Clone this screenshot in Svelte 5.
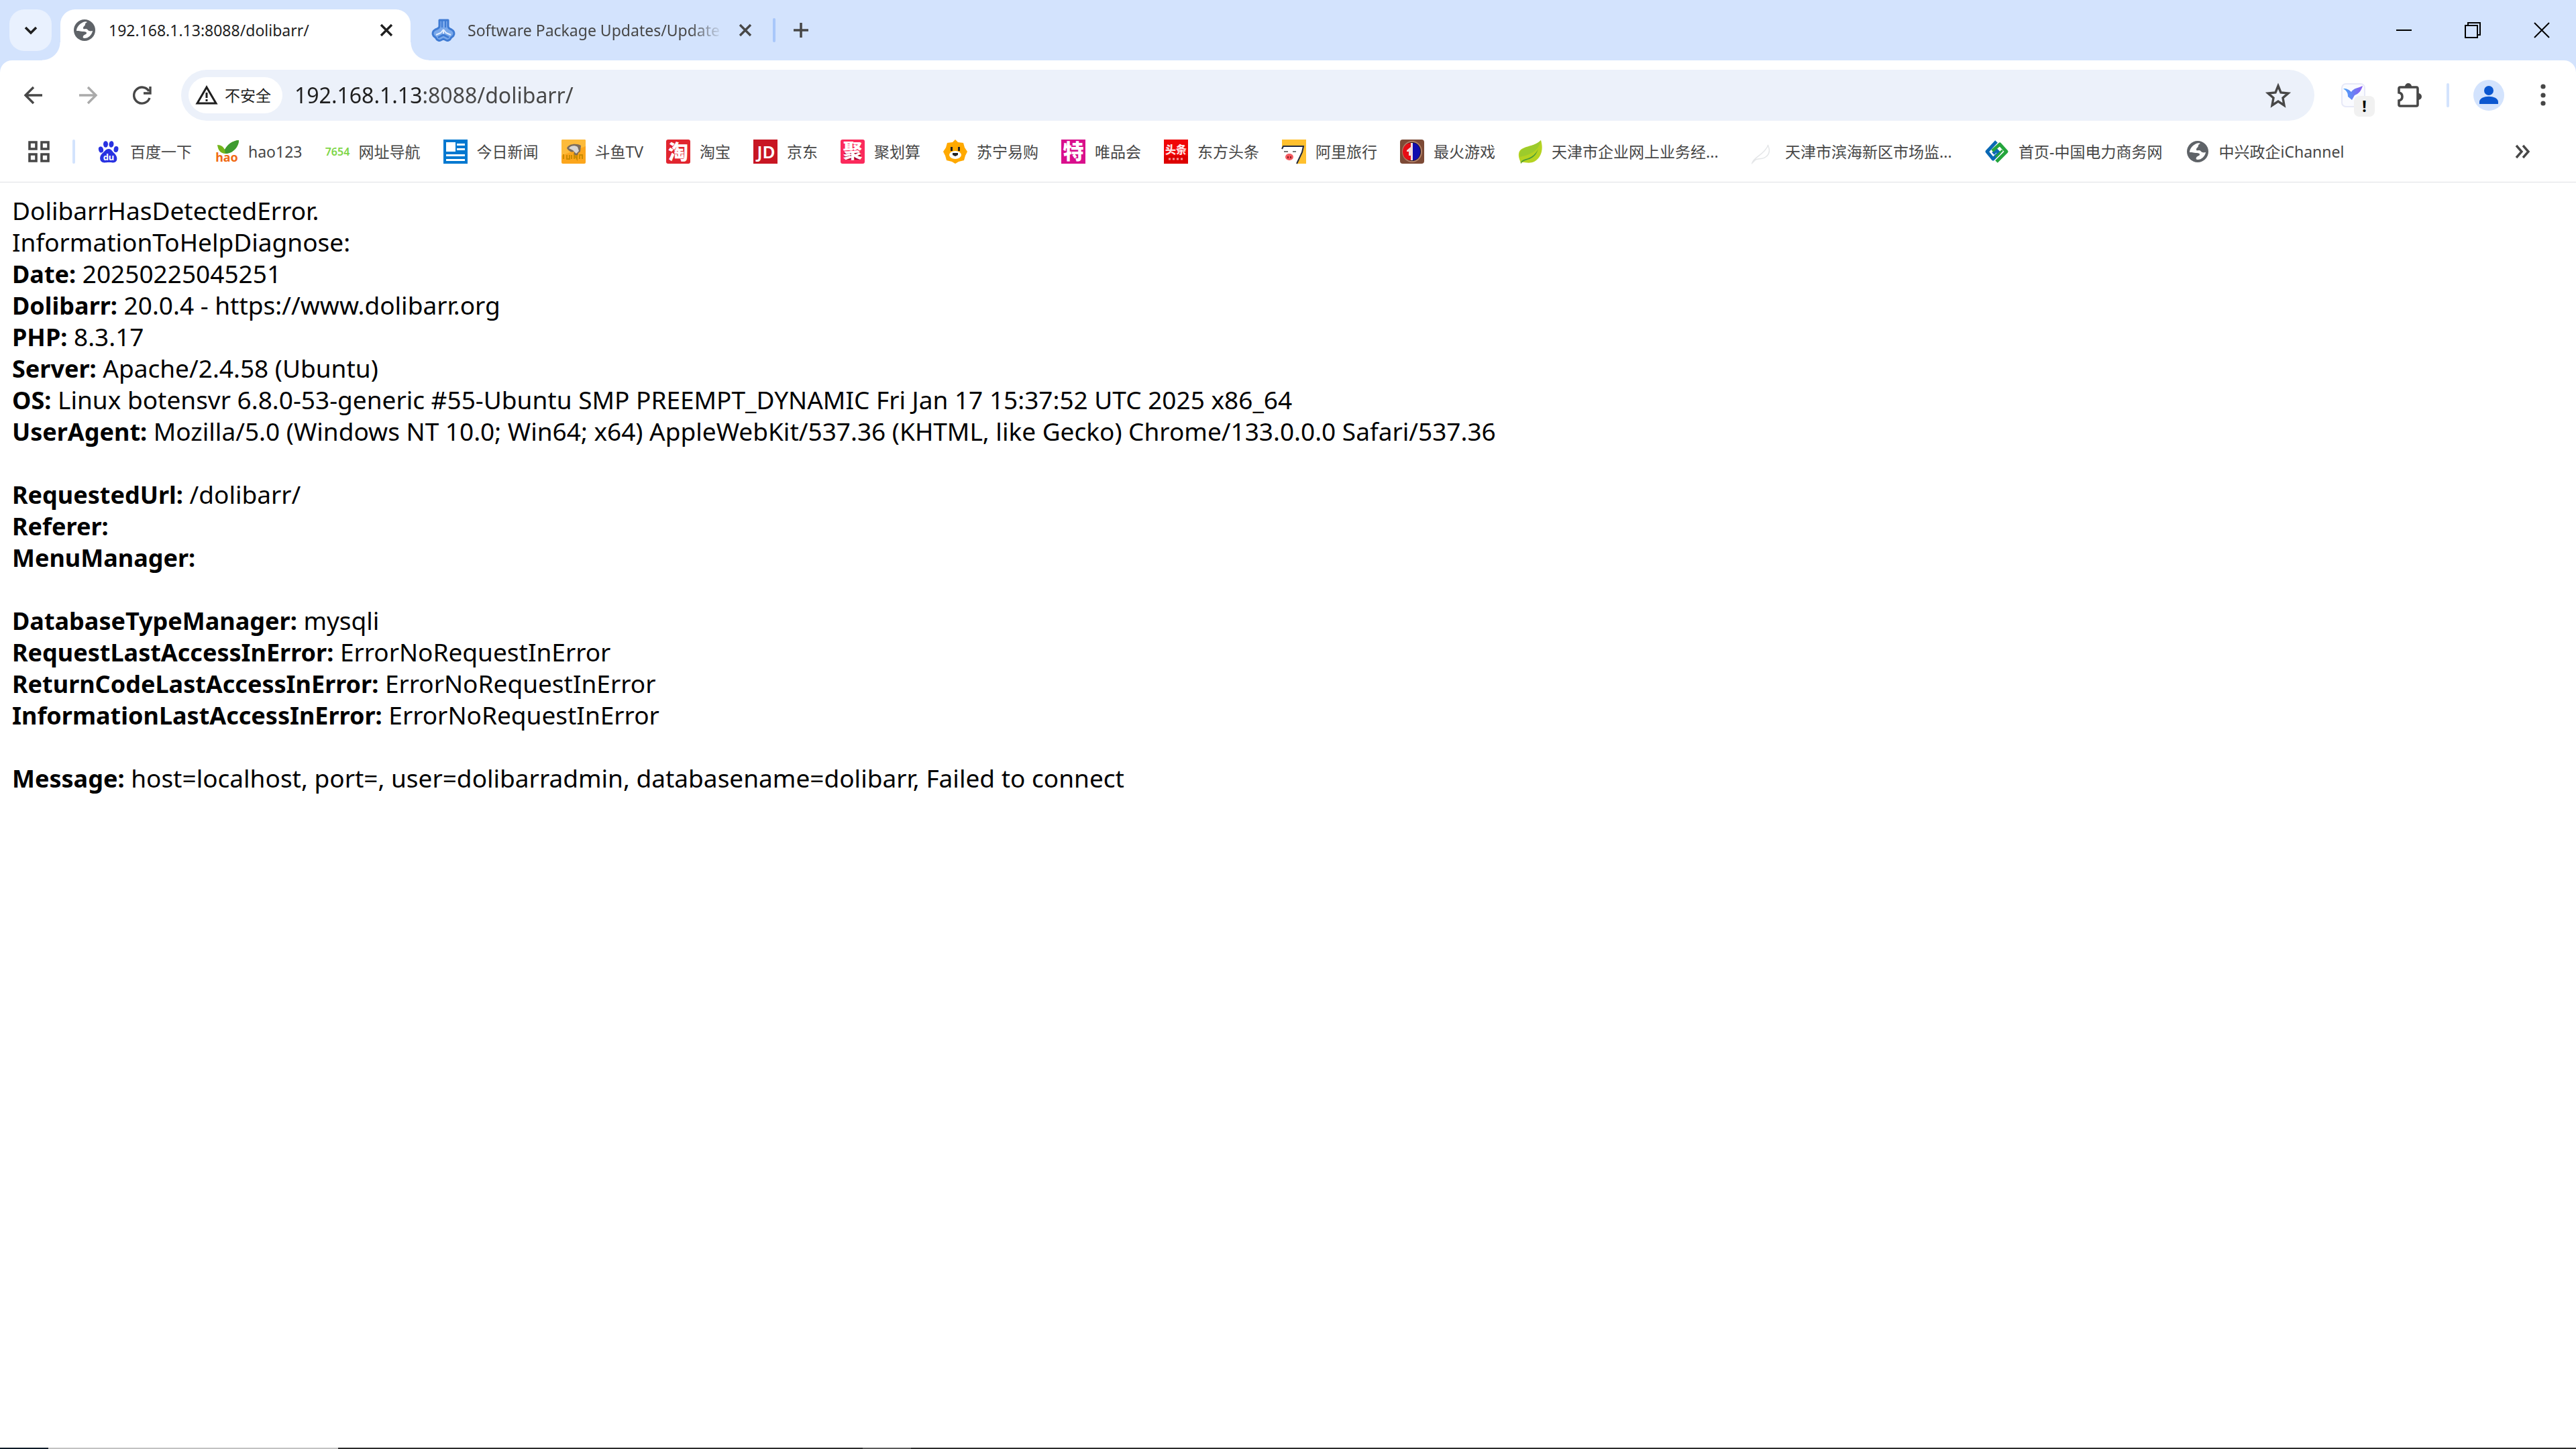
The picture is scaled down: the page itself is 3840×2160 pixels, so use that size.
<script>
  const bookmarks = [
    { icon: 'baidu', label: '百度一下' },
    { icon: 'hao', label: 'hao123' },
    { icon: 'nav', label: '网址导航' },
    { icon: 'news', label: '今日新闻' },
    { icon: 'douyu', label: '斗鱼TV' },
    { icon: 'taobao', label: '淘宝' },
    { icon: 'jd', label: '京东' },
    { icon: 'ju', label: '聚划算' },
    { icon: 'suning', label: '苏宁易购' },
    { icon: 'vip', label: '唯品会' },
    { icon: 'toutiao', label: '东方头条' },
    { icon: 'ali', label: '阿里旅行' },
    { icon: 'game', label: '最火游戏' },
    { icon: 'leaf', label: '天津市企业网上业务经...', long: true },
    { icon: 'faint', label: '天津市滨海新区市场监...', long: true },
    { icon: 'power', label: '首页-中国电力商务网' },
    { icon: 'globe', label: '中兴政企iChannel' }
  ];

  const sections = [
    [
      ['', 'DolibarrHasDetectedError.'],
      ['', 'InformationToHelpDiagnose:'],
      ['Date:', '20250225045251'],
      ['Dolibarr:', '20.0.4 - https://www.dolibarr.org'],
      ['PHP:', '8.3.17'],
      ['Server:', 'Apache/2.4.58 (Ubuntu)'],
      ['OS:', 'Linux botensvr 6.8.0-53-generic #55-Ubuntu SMP PREEMPT_DYNAMIC Fri Jan 17 15:37:52 UTC 2025 x86_64'],
      ['UserAgent:', 'Mozilla/5.0 (Windows NT 10.0; Win64; x64) AppleWebKit/537.36 (KHTML, like Gecko) Chrome/133.0.0.0 Safari/537.36']
    ],
    [
      ['RequestedUrl:', '/dolibarr/'],
      ['Referer:', ''],
      ['MenuManager:', '']
    ],
    [
      ['DatabaseTypeManager:', 'mysqli'],
      ['RequestLastAccessInError:', 'ErrorNoRequestInError'],
      ['ReturnCodeLastAccessInError:', 'ErrorNoRequestInError'],
      ['InformationLastAccessInError:', 'ErrorNoRequestInError']
    ],
    [['Message:', 'host=localhost, port=, user=dolibarradmin, databasename=dolibarr, Failed to connect']]
  ];

  let address = $state('192.168.1.13:8088/dolibarr/');
</script>

{#snippet globe()}
  <svg class="favicon" viewBox="0 0 36 36" aria-hidden="true">
    <circle cx="18" cy="18" r="16" fill="#5f6368" />
    <path d="M16 6c2-1 5-1 6 0-1 1-3 1-3 3 0 3-3 3-3 6 0 2 2 1 4 1 3 0 3 3 5 3 2 1 4 0 5 0-1 6-6 11-12 11-2 0-3-1-2-3 1-3 5-2 5-5 0-2-5-2-6-2-3 0-4-1-6-1H6c0-5 4-10 10-13Z" fill="#fff" />
  </svg>
{/snippet}

{#snippet cross()}
  <svg class="small" viewBox="0 0 22 22" aria-hidden="true"><path d="m3 3 16 16M19 3 3 19" fill="none" stroke="currentColor" stroke-width="3.4" /></svg>
{/snippet}

{#snippet site(name)}
  {#if name === 'globe'}
    {@render globe()}
  {:else}
    <svg class="favicon" viewBox="0 0 36 36" aria-hidden="true">
      {#if name === 'baidu'}
        <g fill="#2932e1">
          <ellipse cx="6.500" cy="15" rx="3.500" ry="4.600" transform="rotate(-15 6.500 15)" />
          <ellipse cx="13.500" cy="7" rx="3.500" ry="4.800" />
          <ellipse cx="22" cy="7" rx="3.500" ry="4.800" transform="rotate(8 22 7)" />
          <ellipse cx="29" cy="14.500" rx="3.400" ry="4.600" transform="rotate(10 29 14.500)" />
          <path d="M18 14c5 0 5 4 9 7 4 4 5 11 0 13-3 1-5 0-9 0s-6 1-9 0c-5-2-5-9-1-13 4-3 5-7 10-7Z" />
        </g>
        <text x="18" y="31" font-size="13" font-weight="700" text-anchor="middle" fill="#fff">du</text>
      {:else if name === 'hao'}
        <path d="M4 8c6 0 9 3 11 7C19 8 25 2 36 1c0 10-9 20-20 20C9 21 5 16 4 8Z" fill="#74b51a" />
        <path d="M15 15C19 8 25 2 36 1c0 10-9 20-20 20Z" fill="#3e9b2f" />
        <text x="18" y="33" font-size="18" font-weight="700" text-anchor="middle" fill="#f06a14">hao</text>
      {:else if name === 'nav'}
        <text x="18" y="24" font-size="16" font-weight="600" text-anchor="middle" fill="#7ed648">7654</text>
      {:else if name === 'news'}
        <path d="M0 0h36v36H0z" fill="#0078d0" />
        <path d="M4 4h14v14H4zM20 6h12v3H20zM20 13h12v3H20zM4 22h28v3H4zM4 29h28v3H4z" fill="#fff" />
      {:else if name === 'douyu'}
        <rect width="36" height="36" rx="2" fill="#fca61c" />
        <path d="M0 2q0-2 2-2h32q2 0 2 2v8L0 24Z" fill="#fdbb3a" />
        <path d="M8 13c2-7 15-8 21-4l-1 9-3 2-1 4-6-1 1-5c-3 1-7 1-11-5Z" fill="#7b6c5b" />
        <path d="M11 13c2-4 9-5 13-2l2 6-4 4-5-5Z" fill="#d8d6d4" />
        <path d="M3 22v7M8 23v6h4v-6M15 23v6M19 29v-6l4 6v-6M27 29v-6h4v6" fill="none" stroke="#c98b00" stroke-width="2" />
      {:else if name === 'taobao'}
        <rect width="36" height="36" rx="3" fill="#e1252f" />
        <text x="18" y="29" font-size="30" font-weight="900" text-anchor="middle" fill="#fff">淘</text>
      {:else if name === 'jd'}
        <path d="M0 0h36v36H0z" fill="#c81623" />
        <text x="19" y="28" font-size="26" font-weight="600" text-anchor="middle" fill="#fff">JD</text>
      {:else if name === 'ju'}
        <rect width="36" height="36" rx="3" fill="#fb2a5c" />
        <path d="M6 20h24v10H6z" fill="#a8002c" />
        <text x="18" y="28" font-size="29" font-weight="900" text-anchor="middle" fill="#fff">聚</text>
      {:else if name === 'suning'}
        <path d="m18 0 4 4 8 1 2 7 4 6-3 6-2 7-8 2-5 3-5-3-8-2-2-7-3-6 4-6 2-7 8-1Z" fill="#ffa900" />
        <ellipse cx="18" cy="23" rx="9" ry="6" fill="#fff" />
        <path d="M11 11h3v6h-3zM22 11h3v6h-3zM14 20h8v3l-4 2-4-2z" fill="#222" />
      {:else if name === 'vip'}
        <path d="M0 0h36v36H0z" fill="#d90f8c" />
        <text x="18" y="29" font-size="31" font-weight="900" text-anchor="middle" fill="#fff">特</text>
      {:else if name === 'toutiao'}
        <path d="M0 0h36v36H0z" fill="#f00606" />
        <path d="M0 24h36v12H0z" fill="#d00" />
        <text x="18" y="21" font-size="16" font-weight="900" text-anchor="middle" fill="#ffe3e3">头条</text>
        <path d="M7 29h22" stroke="#f39a9a" stroke-width="3" stroke-dasharray="3 3" />
      {:else if name === 'ali'}
        <path d="M0 0h36v36H0z" fill="#ffc02e" />
        <path d="M1 10h31l-2 8-8 18H0V14Z" fill="#fff" />
        <path d="M0 14 2 10h30l-2 9-8 17" fill="none" stroke="#222a3e" stroke-width="2" />
        <ellipse cx="11" cy="26" rx="6" ry="5" fill="#f45a60" />
        <path d="M3 18h6M16 18h5" stroke="#777" stroke-width="2" />
        <path d="M8 25h2v3H8zM12 25h2v3h-2z" fill="#8e2026" />
      {:else if name === 'game'}
        <rect width="36" height="36" rx="4" fill="#7d4a36" />
        <ellipse cx="18" cy="18" rx="14" ry="15" fill="#1c1016" stroke="#b08068" stroke-width="2" />
        <path d="M17 5v26C8 31 4 25 4 18S9 5 17 5Z" fill="#e60d15" />
        <path d="M19 5v26c7 0 11-6 11-13S26 5 19 5Z" fill="#100cae" />
        <path d="M16 5h3v26h-3zM10 16l6-5v13h-3v-6h-3z" fill="#f2dcdc" />
      {:else if name === 'leaf'}
        <path d="M34 1c4 13 1 26-10 32-6 3-13 1-18 1l-2 2c0-3-4-9-3-15C3 8 24 12 34 1Z" fill="#b5d321" />
        <path d="M34 1c-3 14-12 21-31 25-4-18 19-12 31-25Z" fill="#9ccb2c" />
        <path d="M4 36c0-10 17-3 26-22-4 13-12 15-19 17-4 1-6 3-7 5Z" fill="#46993a" />
      {:else if name === 'faint'}
        <path d="M24 8c4 7 3 14-3 18-5 4-11 2-15 4l-5 5c2-9 18-12 24-27" fill="none" stroke="#e4e6e8" stroke-width="1.500" />
      {:else if name === 'power'}
        <path d="M17 3 3 18l9 11 9-9-4-4-5 5" fill="none" stroke="#0a68b4" stroke-width="5" stroke-linejoin="round" />
        <path d="m17 33 15-15L22 7 11 17" fill="none" stroke="#24a53c" stroke-width="5" stroke-linejoin="round" />
        <path d="m26 16-10 10" fill="none" stroke="#24a53c" stroke-width="3" />
      {/if}
    </svg>
  {/if}
{/snippet}

<div class="browser">
  <header class="strip">
    <button class="search-tabs" aria-label="Search tabs">
      <svg class="small" viewBox="0 0 22 22" aria-hidden="true"><path d="m3 7 8 8 8-8" fill="none" stroke="currentColor" stroke-width="3.600" /></svg>
    </button>
    <div class="tab active">
      {@render globe()}
      <span class="title">192.168.1.13:8088/dolibarr/</span>
      <button class="close" aria-label="Close tab">{@render cross()}</button>
    </div>
    <div class="tab">
      <svg class="favicon" viewBox="0 0 36 36" aria-hidden="true">
        <path d="M12 3h13v9c0 3 2 4 5 5 4 2 5 6 3 9-1 2-3 2-4 4-1 3-5 4-7 3l-4-2-4 2c-2 1-6 0-7-3-1-2-3-2-4-4-2-3-1-7 3-9 3-1 6-2 6-5Z" fill="#7ba9ea" stroke="#3f7bd3" stroke-width="3" stroke-linejoin="round" />
        <path d="M16 4v10M21 4v10" fill="none" stroke="#3f7bd3" stroke-width="2" />
        <path d="m18 17-4 5-7 3M18 17l4 5 7 3M18 17v8" fill="none" stroke="#e4eefe" stroke-width="2" />
        <path d="m10 29 8-4 8 4" fill="none" stroke="#3f7bd3" stroke-width="3" />
      </svg>
      <span class="title faded">Software Package Updates/Update</span>
      <button class="close" aria-label="Close tab">{@render cross()}</button>
    </div>
    <span class="divider strong"></span>
    <button class="new-tab" aria-label="New tab">
      <svg class="medium" viewBox="0 0 28 28" aria-hidden="true"><path d="M14 3v22M3 14h22" fill="none" stroke="currentColor" stroke-width="3.600" /></svg>
    </button>
    <div class="window-controls">
      <button aria-label="Minimize"><svg class="medium" viewBox="0 0 28 28" aria-hidden="true"><path d="M3 14h23" stroke="#000" stroke-width="2" /></svg></button>
      <button aria-label="Restore"><svg class="medium" viewBox="0 0 28 28" aria-hidden="true"><path d="M3 7h18v18H3zM7 7V3h18v18h-4" fill="none" stroke="#000" stroke-width="2" /></svg></button>
      <button aria-label="Close window"><svg class="medium" viewBox="0 0 28 28" aria-hidden="true"><path d="m3 3 22 22M25 3 3 25" stroke="#000" stroke-width="2" /></svg></button>
    </div>
  </header>

  <div class="chrome">
    <div class="toolbar">
      <button class="nav" aria-label="Back"><svg class="favicon" viewBox="0 0 36 36" aria-hidden="true"><path d="M31 18H7M18 6 6 18l12 12" fill="none" stroke="currentColor" stroke-width="3.400" /></svg></button>
      <button class="nav off" aria-label="Forward"><svg class="favicon" viewBox="0 0 36 36" aria-hidden="true"><path d="M5 18h24M18 6l12 12-12 12" fill="none" stroke="currentColor" stroke-width="3.400" /></svg></button>
      <button class="nav" aria-label="Reload"><svg class="favicon" viewBox="0 0 36 36" aria-hidden="true"><path d="M29 22A12 12 0 1 1 28 12M30 5v10H20" fill="none" stroke="currentColor" stroke-width="3.400" /></svg></button>
      <div class="omnibox">
        <button class="chip">
          <svg class="favicon" viewBox="0 0 36 36" aria-hidden="true"><path d="M18 6 4 30h28Z" fill="none" stroke="currentColor" stroke-width="3" /><path d="M18 14v8M18 24v3" stroke="currentColor" stroke-width="3" /></svg>
          不安全
        </button>
        <input class="address" type="text" aria-label="Address" bind:value={address} />
        <button class="star" aria-label="Bookmark this page"><svg class="large" viewBox="0 0 40 40" aria-hidden="true"><path d="m20 6 4 10 11 1-8 7 2 11-9-6-9 6 2-11-8-7 11-1Z" fill="none" stroke="currentColor" stroke-width="3.400" /></svg></button>
      </div>
      <div class="actions">
        <button class="extension" aria-label="Extension">
          <svg class="favicon" viewBox="0 0 36 36" aria-hidden="true">
            <defs><linearGradient id="bird" x1="0" y1="0" x2="1" y2="0"><stop offset="0" stop-color="#4aa5f8" /><stop offset="1" stop-color="#8a5cf0" /></linearGradient></defs>
            <rect x="1" y="1" width="34" height="34" rx="6" fill="#fafbff" stroke="#e7e9f8" stroke-width="2" />
            <path d="M3 8c6 0 9 2 12 5C19 7 24 8 32 4c-2 7-6 12-12 14l-4 7-6-5c0-5-1-8-7-12Z" fill="url(#bird)" />
          </svg>
          <span class="badge">!</span>
        </button>
        <button class="puzzle" aria-label="Extensions"><svg class="large" viewBox="0 0 40 40" aria-hidden="true"><path d="M6 10q0-2 2-2h24q2 0 2 2v24q0 2-2 2H8q-2 0-2-2v-6q5-1 5-6t-5-6Z" fill="none" stroke="currentColor" stroke-width="3.600" /><path d="M15 7a5 5 0 0 1 10 0ZM35 17a5 5 0 0 1 0 10Z" fill="currentColor" /></svg></button>
        <span class="divider"></span>
        <button class="avatar" aria-label="Profile"><svg viewBox="0 0 46 46" aria-hidden="true"><circle cx="23" cy="16" r="7" fill="#0b57d0" /><path d="M9 36v-3c0-11 28-11 28 0v3Z" fill="#0b57d0" /></svg></button>
        <button class="more" aria-label="Menu"><svg class="large" viewBox="0 0 40 40" aria-hidden="true"><g fill="currentColor"><circle cx="20" cy="7" r="3.600" /><circle cx="20" cy="20" r="3.600" /><circle cx="20" cy="32" r="3.600" /></g></svg></button>
      </div>
    </div>

    <nav class="bookmarks" aria-label="Bookmarks">
      <button class="apps" aria-label="Apps"><svg class="favicon" viewBox="0 0 36 36" aria-hidden="true"><path d="M4 4h10v10H4zM22 4h10v10H22zM4 22h10v10H4zM22 22h10v10H22z" fill="none" stroke="currentColor" stroke-width="3.600" /></svg></button>
      <span class="divider"></span>
      <div class="links">
        {#each bookmarks as item}
          <a href="#{item.icon}">{@render site(item.icon)}<span class:long={item.long}>{item.label}</span></a>
        {/each}
      </div>
      <button class="overflow" aria-label="More bookmarks"><svg class="medium" viewBox="0 0 28 28" aria-hidden="true"><path d="m5 5 8 9-8 9M15 5l8 9-8 9" fill="none" stroke="currentColor" stroke-width="3.400" /></svg></button>
    </nav>
  </div>

  <main>
    {#each sections as rows}
      <section>
        {#each rows as [name, value]}
          <p>{#if name}<b>{name}</b>{/if} {value}</p>
        {/each}
      </section>
    {/each}
  </main>

  <div class="taskbar"><i class="dark"></i><i class="window"></i><i class="rest"></i><i class="item"></i><i class="rest grow"></i></div>
</div>

<style>
  :global(body) {
    margin: 0;
    background: #fff;
  }
  .browser {
    display: flex;
    flex-direction: column;
    min-height: 100vh;
    background: #fff;
    color: #474747;
    font-family: 'Noto Sans', 'Noto Sans CJK SC', sans-serif;
    font-size: 23px;
    line-height: 32px;
  }
  button {
    display: flex;
    align-items: center;
    justify-content: center;
    flex: none;
    padding: 0;
    border: 0;
    background: none;
    color: inherit;
    font: inherit;
  }
  svg {
    display: block;
    flex: none;
    overflow: visible;
  }
  .small {
    width: 22px;
    height: 22px;
  }
  .medium {
    width: 28px;
    height: 28px;
  }
  .favicon {
    width: 36px;
    height: 36px;
  }
  .large {
    width: 40px;
    height: 40px;
  }
  .divider {
    flex: none;
    width: 4px;
    height: 36px;
    border-radius: 2px;
    background: #d3e3fd;
  }
  .divider.strong {
    background: #a8c7fa;
  }

  .strip {
    display: flex;
    align-items: center;
    height: 90px;
    padding-left: 14px;
    background: #d3e3fd;
  }
  .search-tabs {
    width: 63px;
    height: 62px;
    margin-right: 13px;
    border-radius: 22px;
    background: #e9f1fe;
    color: #1f1f1f;
  }
  .tab {
    display: flex;
    align-items: center;
    box-sizing: border-box;
    width: 540px;
    height: 76px;
    padding: 0 30px 0 31px;
  }
  .tab.active {
    position: relative;
    align-self: flex-end;
    width: 522px;
    padding: 0 25px 14px 18px;
    border-radius: 22px 22px 0 0;
    background: #fff;
    color: #1f1f1f;
  }
  .tab.active::before,
  .tab.active::after {
    content: '';
    position: absolute;
    bottom: 0;
    width: 27px;
    height: 27px;
  }
  .tab.active::before {
    right: 100%;
    background: radial-gradient(circle at 0 0, transparent 26px, #fff 27px);
  }
  .tab.active::after {
    left: 100%;
    background: radial-gradient(circle at 100% 0, transparent 26px, #fff 27px);
  }
  .title {
    flex: 1;
    margin: 0 22px 0 18px;
    overflow: hidden;
    white-space: nowrap;
  }
  .faded {
    mask-image: linear-gradient(to left, transparent, #000 50px);
  }
  .strip > .divider {
    margin-right: 22px;
  }
  .new-tab {
    width: 32px;
    height: 62px;
  }
  .window-controls {
    display: flex;
    margin-left: auto;
  }
  .window-controls button {
    width: 103px;
    height: 88px;
  }

  .chrome {
    border-bottom: 1px solid #dfe1e5;
    background: linear-gradient(#d3e3fd 30px, #fff 30px);
  }
  .toolbar {
    display: flex;
    align-items: center;
    padding: 14px 29px 14px 9px;
    border-radius: 18px 18px 0 0;
    background: #fff;
  }
  .nav {
    width: 81px;
    height: 62px;
  }
  .off {
    color: #aaa;
  }
  .omnibox {
    display: flex;
    align-items: center;
    flex: 1;
    box-sizing: border-box;
    height: 76px;
    margin: 0 40px 0 18px;
    padding: 0 34px 0 11px;
    border-radius: 38px;
    background: #ecf1fa;
  }
  .chip {
    gap: 9px;
    height: 54px;
    padding: 0 17px 0 9px;
    border-radius: 27px;
    background: #fff;
    color: #1f1f1f;
  }
  .address {
    flex: 1;
    min-width: 0;
    margin-left: 18px;
    padding: 0;
    border: 0;
    outline: 0;
    background: linear-gradient(to right, #1f1f1f 190px, #474747 190px) text;
    -webkit-text-fill-color: transparent;
    font: inherit;
    font-size: 32px;
    line-height: 44px;
  }
  .actions {
    display: flex;
    align-items: center;
  }
  .extension {
    position: relative;
    margin-right: 44px;
  }
  .badge {
    position: absolute;
    top: 19px;
    left: 19px;
    width: 31px;
    border-radius: 8px;
    background: #f1f1f1;
    color: #000;
    font-weight: 700;
    line-height: 31px;
  }
  .puzzle {
    margin-right: 37px;
  }
  .avatar {
    width: 46px;
    height: 46px;
    margin: 0 38px 0 36px;
    border-radius: 50%;
    background: #d3e3fd;
  }
  .avatar svg {
    width: 46px;
    height: 46px;
  }

  .bookmarks {
    display: flex;
    align-items: center;
    height: 64px;
    padding: 0 66px 13px 40px;
  }
  .apps {
    margin-right: 32px;
  }
  .links {
    display: flex;
    flex: 1;
    gap: 34px;
    min-width: 0;
    margin-left: 32px;
  }
  .links a {
    display: flex;
    align-items: center;
    flex: none;
    gap: 14px;
    color: inherit;
    text-decoration: none;
    white-space: nowrap;
  }
  .long {
    width: 264px;
  }

  main {
    flex: 1;
    padding: 18px;
    color: #000;
    font-size: 37px;
    line-height: 47px;
  }
  section + section {
    margin-top: 47px;
  }
  p {
    margin: 0;
  }
  b {
    font-size: 36px;
    line-height: 36px;
  }

  .taskbar {
    display: flex;
    height: 2px;
  }
  .taskbar i {
    width: 72px;
    background: #2b2b2b;
  }
  .taskbar .dark {
    background: #101b28;
  }
  .taskbar .window {
    width: 432px;
    background: #c2c2c2;
  }
  .taskbar .rest {
    width: 782px;
  }
  .taskbar .item {
    background: #5a5a5a;
  }
  .taskbar .grow {
    flex: 1;
  }
</style>
